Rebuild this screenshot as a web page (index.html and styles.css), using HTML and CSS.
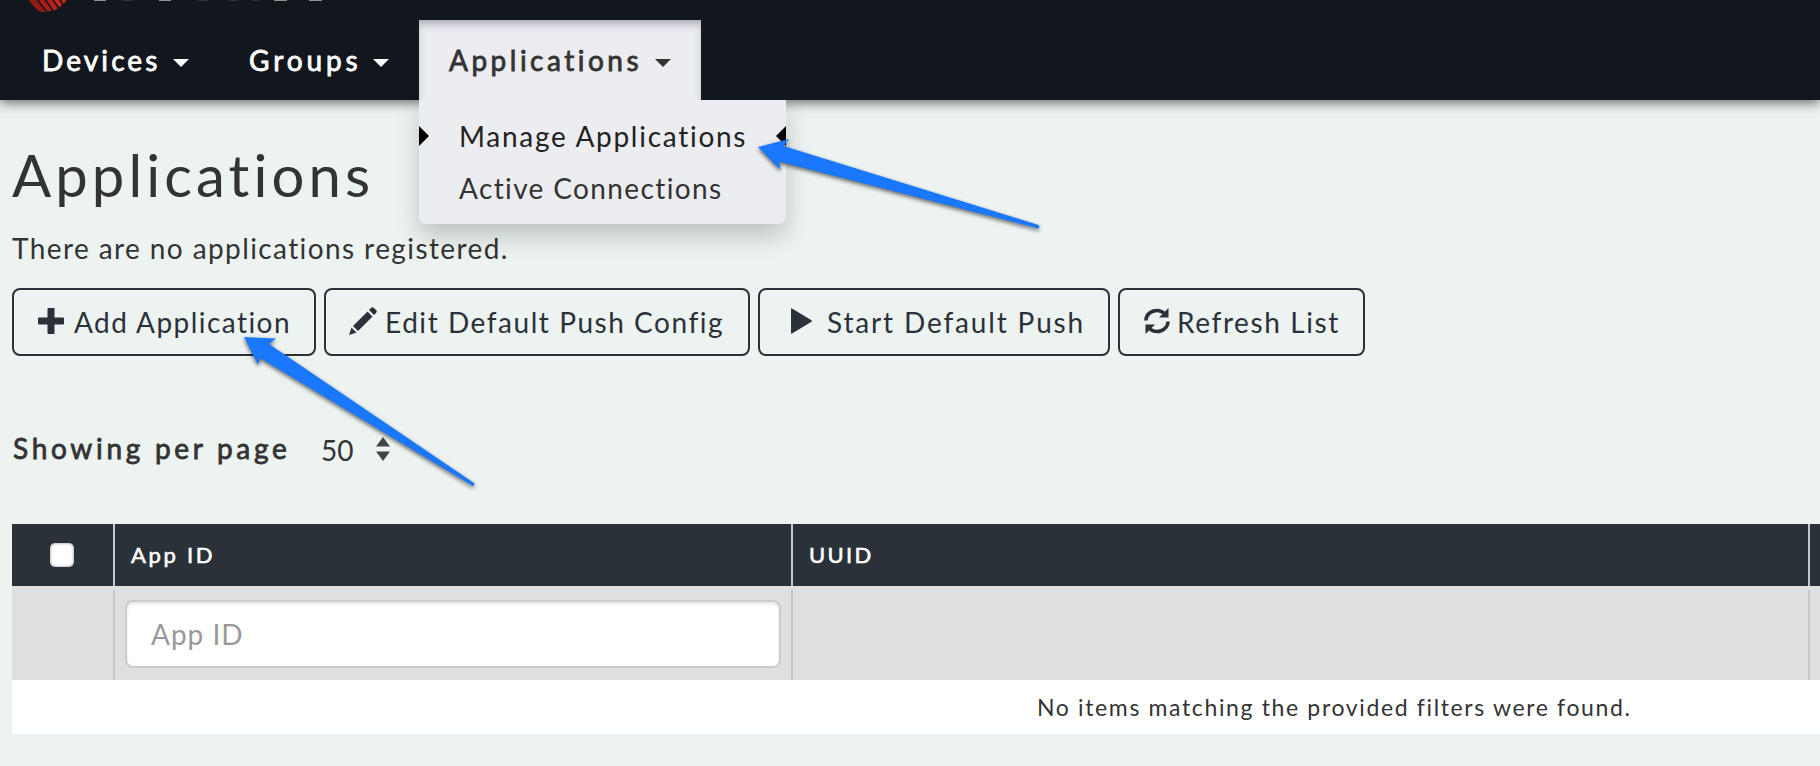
FILE: index.html
```html
<!DOCTYPE html>
<html lang="en">
<head>
<meta charset="utf-8">
<title>Applications</title>
<link rel="stylesheet" href="styles.css">
</head>
<body>
<header class="topbar">
  <svg class="logo" width="340" height="14" viewBox="0 0 340 14" aria-hidden="true">
    <path d="M29 0H36.500L46 12H40Q33 7 29 0z" fill="#8f1b13"/>
    <path d="M38.500 0H44.500L52 10.500 47.500 11.500z" fill="#a51d14"/>
    <path d="M46.500 0H52L58 8.500 54 10.500z" fill="#b72319"/>
    <path d="M54 0H59L62 5 59.500 7.500z" fill="#c8281c"/>
    <path d="M61 0H66.500L63.500 4z" fill="#c8281c"/>
    <g fill="#8b9296"><rect x="94" width="12" height="1"/><rect x="159" width="12" height="1"/><rect x="274" width="13" height="1"/><rect x="309" width="13" height="1"/></g>
    <g fill="#2f353b"><rect x="122" width="11" height="1"/><rect x="198" width="10" height="1"/><rect x="229" width="9" height="1"/><rect x="252" width="7" height="1"/></g>
  </svg>
  <nav class="nav">
    <a class="nav-item devices"><span>Devices</span><i class="caret"></i></a>
    <a class="nav-item groups"><span>Groups</span><i class="caret"></i></a>
    <div class="nav-item active"><span>Applications</span><i class="caret"></i>
      <div class="menu">
        <a class="menu-item current"><span class="m1">Manage Applications</span></a>
        <a class="menu-item"><span class="m2">Active Connections</span></a>
      </div>
    </div>
  </nav>
</header>
<main class="content">
  <h1 class="title">Applications</h1>
  <p class="lead">There are no applications registered.</p>
  <div class="actions">
    <button class="btn add"><svg width="26" height="26" viewBox="0 0 26 26"><path d="M10.500 0h5q1 0 1 1v8.500h8.500q1 0 1 1v5q0 1-1 1h-8.500V25q0 1-1 1h-5q-1 0-1-1v-8.500H1q-1 0-1-1v-5q0-1 1-1h8.500V1q0-1 1-1z"/></svg><span>Add Application</span></button>
    <button class="btn edit"><svg width="28" height="28" viewBox="0 0 28 28"><path d="M0 28 2.500 20.500 7.500 25.500zM4 19 18.500 4.500 23.500 9.500 9 24zM20 3 22 1Q23.500-.500 25 1l2 2q1.500 1.500 0 3l-2 2z"/></svg><span>Edit Default Push Config</span></button>
    <button class="btn start"><svg width="21" height="26" viewBox="0 0 21 26"><path d="M0 1Q0 0 1 .500L20.500 12.300q.800.700 0 1.400L1 25.500Q0 26 0 25z"/></svg><span>Start Default Push</span></button>
    <button class="btn refresh"><svg width="26" height="26" viewBox="0 0 26 26"><path d="M1.900 12.500A11 10.500 0 0 1 20.500 5.500" fill="none" stroke="#2b3139" stroke-width="3.600"/><path d="M24.500 0v9.500h-9.500z"/><path d="M24.100 13.500A11 10.500 0 0 1 5.500 20.500" fill="none" stroke="#2b3139" stroke-width="3.600"/><path d="M1.500 26V16.500h9.500z"/></svg><span>Refresh List</span></button>
  </div>
  <div class="pager">
    <span class="pager-label">Showing per page</span>
    <span class="pager-value">50</span>
    <svg width="14" height="24" viewBox="0 0 14 24"><path d="M7 0 14 9.500H0zM0 14.500H14L7 24z" fill="#444"/></svg>
  </div>
  <section class="grid">
    <div class="row head">
      <div class="cell check"><i class="box"></i></div>
      <div class="cell h-app">App ID</div>
      <div class="cell h-uuid">UUID</div>
      <div class="cell"></div>
    </div>
    <div class="row filters">
      <div class="cell"></div>
      <div class="cell field"><input class="filter" type="text" placeholder="App ID"></div>
      <div class="cell"></div>
      <div class="cell"></div>
    </div>
    <div class="empty">No items matching the provided filters were found.</div>
  </section>
</main>
<svg class="arrows" width="1820" height="766" viewBox="0 0 1820 766" aria-hidden="true">
  <g fill="#1a78ff">
    <path d="M758 147 789 139 783.500 146 1038.500 225Q1040 227 1038.500 228.500L779 161.500 780.500 170z"/>
    <path d="M244 337 276 338.500 269 344 474 483Q475 485 473 486L260 358 258 365z"/>
  </g>
</svg>
</body>
</html>
```
FILE: styles.css
```css
* { box-sizing: border-box; }
body {
  margin: 0;
  width: 1820px;
  height: 766px;
  overflow: hidden;
  position: relative;
  background: #ecf3f1;
  color: #333;
  font-family: Lato, "Open Sans", sans-serif;
  font-size: 28px;
  line-height: 34px;
}
.topbar {
  height: 100px;
  background: #12171e;
  box-shadow: 0 3px 11px rgba(0, 0, 0, .55);
  position: relative;
  z-index: 2;
}
.logo { display: block; height: 14px; }
.nav { display: flex; height: 80px; margin-top: 6px; }
.nav-item {
  display: flex;
  align-items: center;
  justify-content: space-between;
  position: relative;
  color: #fff;
  letter-spacing: 3.100px;
  white-space: nowrap;
}
.nav-item > span, .pager-label { -webkit-text-stroke: .8px currentColor; }
.devices { width: 189px; margin-left: 42px; padding-right: 42px; }
.groups { width: 188px; padding: 0 30px 0 18px; letter-spacing: 3.900px; }
.active {
  width: 282px;
  padding: 0 30px;
  background: #ecedf0;
  color: #333;
  box-shadow: inset 0 6px 9px -3px rgba(60, 60, 90, .45);
  letter-spacing: 3.500px;
}
.caret {
  width: 0;
  height: 0;
  margin-top: 6px;
  border: 8px solid transparent;
  border-top-color: currentColor;
  border-bottom: 0;
}
.menu {
  position: absolute;
  top: 80px;
  left: 0;
  width: 367px;
  height: 124px;
  padding-top: 10px;
  border-radius: 0 0 8px 8px;
  background: #ecedf0;
  box-shadow: 0 12px 24px rgba(0, 0, 0, .2);
  clip-path: inset(0 -40px -50px -40px);
}
.menu-item {
  display: flex;
  align-items: center;
  height: 52px;
  padding-left: 40px;
  color: #333;
  position: relative;
}
.current { color: #222; }
.current::before, .current::after {
  content: "";
  position: absolute;
  top: 16px;
  border: 10px solid transparent;
}
.current::before { left: 0; border-left-color: #000; border-right: 0; }
.current::after { right: 0; border-right-color: #000; border-left: 0; }
.m1 { letter-spacing: 1.720px; }
.m2 { letter-spacing: 1.370px; }
.content { padding-left: 12px; }
.title {
  margin: 0;
  padding-top: 40px;
  font-size: 58px;
  line-height: 70px;
  font-weight: 400;
  letter-spacing: 4.100px;
}
.lead { margin: 21px 0 0; letter-spacing: 1.400px; }
.actions { display: flex; gap: 8px; margin-top: 23px; }
.btn {
  display: flex;
  align-items: center;
  height: 68px;
  padding: 0;
  border: 2px solid #2b3139;
  border-radius: 8px;
  background: transparent;
  color: #2b3139;
  font: inherit;
  white-space: nowrap;
}
.btn svg { fill: #2b3139; flex: none; margin-bottom: 2px; }
.add { width: 304px; padding-left: 24px; gap: 10px; letter-spacing: 1.450px; }
.edit { width: 426px; padding-left: 23px; gap: 8px; letter-spacing: 1.550px; }
.start { width: 352px; padding-left: 31px; gap: 15px; letter-spacing: 1.850px; }
.refresh { width: 247px; padding-left: 24px; gap: 7px; letter-spacing: 1.600px; }
.pager { display: flex; align-items: center; height: 34px; margin-top: 76px; }
.pager-label { width: 309px; padding-left: 1px; padding-bottom: 2px; letter-spacing: 3.700px; }
.pager-value { width: 55px; padding-top: 1px; }
.grid { margin-top: 58px; }
.row { display: grid; grid-template-columns: 103px 678px 1017px 1fr; }
.cell { border-right: 2px solid #c8c8c8; }
.cell:last-child { border-right: 0; }
.head {
  height: 62px;
  background: #2b3139;
  color: #fff;
  font-size: 22px;
  -webkit-text-stroke: .6px #fff;
}
.head .cell { display: flex; align-items: center; padding-left: 16px; }
.head .cell:last-child { padding: 0; }
.head .check { justify-content: center; padding: 0 1px 0 0; }
.h-app { letter-spacing: 2.700px; }
.h-uuid { letter-spacing: 2.300px; }
.box {
  width: 24px;
  height: 24px;
  border-radius: 5px;
  background: #fff;
  box-shadow: inset 0 0 3px rgba(0, 0, 0, .5);
}
.filters { height: 94px; padding-top: 4px; background: #dfdfdf; }
.field { padding: 10px; }
.filter {
  display: block;
  width: 656px;
  height: 68px;
  padding: 0 24px;
  border: 2px solid #ccc;
  border-radius: 8px;
  background: #fff;
  box-shadow: inset 0 2px 3px rgba(0, 0, 0, .1);
  font: inherit;
  letter-spacing: 1px;
}
.filter::placeholder { color: #999; opacity: 1; }
.empty {
  height: 54px;
  padding-left: 1025px;
  background: #fff;
  font-size: 23px;
  line-height: 54px;
  letter-spacing: 1.640px;
  white-space: nowrap;
}
.arrows {
  position: absolute;
  inset: 0;
  z-index: 5;
  pointer-events: none;
  filter: drop-shadow(0 2px 2px rgba(0, 0, 0, .6));
}
```
